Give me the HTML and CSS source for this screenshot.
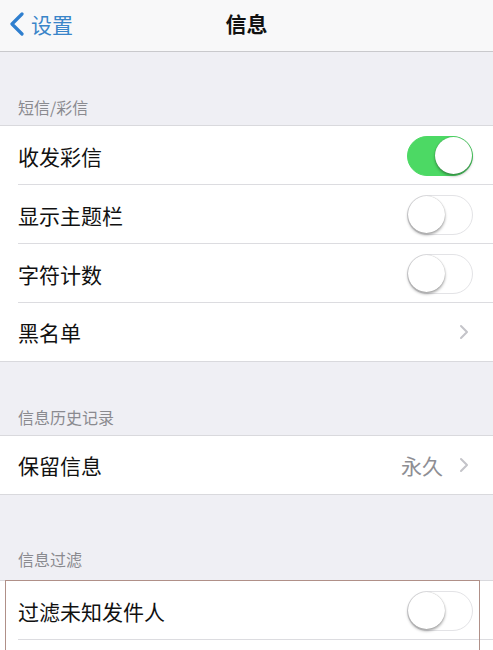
FILE: index.html
```html
<!DOCTYPE html>
<html lang="zh">
<head>
<meta charset="utf-8">
<title>信息</title>
<link rel="stylesheet" href="styles.css">
</head>
<body>
<div class="screen">
  <header class="nav">
    <div class="back">
      <svg class="back-icon" width="18" height="24" viewBox="0 0 18 24"><path d="M14 2 L4 12 L14 22" fill="none" stroke="#2f7fcf" stroke-width="3.2" stroke-linecap="round" stroke-linejoin="round"/></svg>
      <span class="back-text">设置</span>
    </div>
    <div class="title">信息</div>
  </header>

  <div class="section-head">短信/彩信</div>
  <div class="group">
    <div class="row"><span class="label">收发彩信</span><span class="switch on"><span class="knob"></span></span></div>
    <div class="row"><span class="label">显示主题栏</span><span class="switch"><span class="knob"></span></span></div>
    <div class="row"><span class="label">字符计数</span><span class="switch"><span class="knob"></span></span></div>
    <div class="row last"><span class="label">黑名单</span><svg class="chev" width="10" height="16" viewBox="0 0 10 16"><path d="M2 2 L8 8 L2 14" fill="none" stroke="#c4c4c9" stroke-width="2" stroke-linecap="round" stroke-linejoin="round"/></svg></div>
  </div>

  <div class="section-head">信息历史记录</div>
  <div class="group">
    <div class="row last"><span class="label">保留信息</span><span class="value">永久</span><svg class="chev" width="10" height="16" viewBox="0 0 10 16"><path d="M2 2 L8 8 L2 14" fill="none" stroke="#c4c4c9" stroke-width="2" stroke-linecap="round" stroke-linejoin="round"/></svg></div>
  </div>

  <div class="section-head tall">信息过滤</div>
  <div class="group open">
    <div class="row"><span class="label">过滤未知发件人</span><span class="switch"><span class="knob"></span></span></div>
    <div class="row stub"></div>
  </div>

  <div class="highlight"></div>
</div>
</body>
</html>
```

FILE: styles.css
```css
* { box-sizing: border-box; margin: 0; padding: 0; }
html, body { width: 493px; height: 650px; overflow: hidden; }
body {
  background: #efeff4;
  font-family: "Noto Sans CJK SC", "Noto Sans", sans-serif;
  color: #111;
}
.screen { position: relative; width: 493px; height: 650px; overflow: hidden; }

.nav {
  height: 52px;
  background: #f8f8f9;
  border-bottom: 1px solid #c9c9cc;
  display: flex;
  align-items: center;
  position: relative;
}
.back {
  display: flex;
  align-items: center;
  padding-left: 8px;
  gap: 5px;
  margin-top: -4px;
}
.back-text {
  color: #3a85c9;
  font-size: 21px;
  line-height: 24px;
}
.title {
  position: absolute;
  left: 0; right: 0;
  text-align: center;
  font-size: 21px;
  font-weight: 700;
  line-height: 24px;
  top: 11px;
  pointer-events: none;
}

.section-head {
  height: 73px;
  display: flex;
  align-items: flex-end;
  padding: 0 0 8px 18px;
  font-size: 16px;
  line-height: 20px;
  color: #8a8a8f;
}
.section-head.tall { height: 85px; padding-bottom: 11px; }

.group {
  background: #fff;
  border-top: 1px solid #d9d9dd;
  border-bottom: 1px solid #d9d9dd;
}
.group.open { border-bottom: none; }
.row {
  height: 59px;
  display: flex;
  align-items: center;
  padding: 0 22px 0 18px;
  position: relative;
}
.row::after {
  content: "";
  position: absolute;
  left: 18px; right: 0; bottom: 0;
  height: 1px;
  background: #dcdce0;
}
.row.last { height: 58px; }
.row.last::after { display: none; }
.row.stub { height: 10px; }
.row.stub::after { display: none; }
.label { font-size: 21px; line-height: 28px; flex: 1; }
.value { font-size: 21px; color: #8e8e93; margin-right: 16px; }
.chev { margin-right: 2px; }

.switch {
  width: 66px;
  height: 40px;
  border-radius: 20px;
  border: 1.5px solid #e3e3e6;
  background: #fff;
  position: relative;
  margin-right: -2px;
}
.switch .knob {
  position: absolute;
  top: 0; left: 0;
  width: 37px; height: 37px;
  border-radius: 50%;
  background: #fff;
  box-shadow: 0 2px 3px rgba(0,0,0,0.35), 0 0 1px rgba(0,0,0,0.3);
}
.switch.on {
  background: #4cd964;
  border-color: #4cd964;
}
.switch.on .knob { left: auto; right: 0; }

.highlight {
  position: absolute;
  left: 5px;
  top: 580px;
  width: 475px;
  height: 70px;
  border: 1.5px solid #b09088;
  border-bottom: none;
  pointer-events: none;
}
```
